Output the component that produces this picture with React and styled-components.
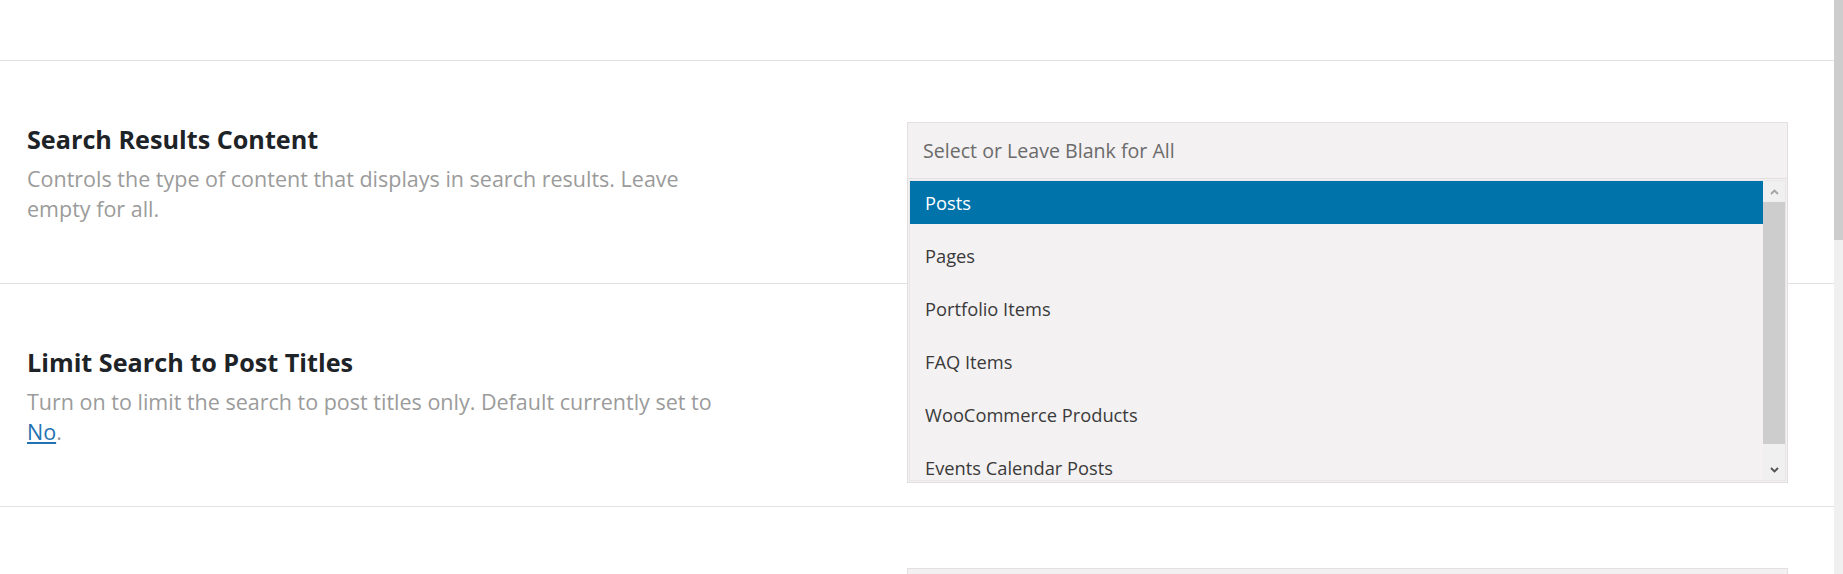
import styled, { createGlobalStyle } from "styled-components";

const GlobalStyle = createGlobalStyle`
  html, body {
    margin: 0;
    padding: 0;
    background: #ffffff;
    overflow: hidden;
  }
  body {
    font-family: "Open Sans", "Noto Sans", sans-serif;
  }
`;

const options = [
  "Posts",
  "Pages",
  "Portfolio Items",
  "FAQ Items",
  "WooCommerce Products",
  "Events Calendar Posts",
];

const Page = styled.div`
  display: flex;
  width: 1843px;
  height: 574px;
  overflow: hidden;
`;

const Main = styled.div`
  flex: 1;
  display: flex;
  flex-direction: column;
`;

const TopSpacer = styled.div`
  height: 60px;
  flex: none;
  border-bottom: 1px solid #e2e2e2;
`;

const Row = styled.div`
  flex: none;
  height: 223px;
  box-sizing: border-box;
  border-bottom: 1px solid #e2e2e2;
  display: flex;
  justify-content: space-between;
  padding: 0 46px 0 27px;
`;

const Info = styled.div`
  width: 700px;
  padding-top: 63px;
`;

const Title = styled.h3`
  margin: 0 0 10px;
  font-size: 25.2px;
  line-height: 30px;
  font-weight: 700;
  color: #1d2327;
`;

const Description = styled.p`
  margin: 0;
  font-size: 21.5px;
  line-height: 30px;
  color: #9b9b9b;

  a {
    color: #2271b1;
    text-decoration: underline;
  }
`;

const Field = styled.div`
  width: 881px;
  padding-top: 61px;
`;

const SelectBox = styled.div`
  position: relative;
  height: 57px;
  box-sizing: border-box;
  border: 1px solid #e2e0e1;
  background: #f3f1f2;
  display: flex;
  align-items: center;
  padding: 0 15px;
  font-size: 19.6px;
  color: #6b6b6b;
  z-index: ${(p) => (p.open ? 5 : 1)};
`;

const ListFrame = styled.div`
  position: absolute;
  top: 55px;
  left: -1px;
  right: -1px;
  height: 305px;
  box-sizing: border-box;
  border: 1px solid #e0dede;
  padding: 1px;
  background: #f3f1f2;
`;

const ListInner = styled.div`
  display: flex;
  height: 100%;
  box-sizing: border-box;
  border: 1px solid #e8e6e7;
`;

const OptionList = styled.div`
  flex: 1;
  overflow: hidden;
`;

const Option = styled.div`
  height: 43px;
  margin-bottom: 10px;
  display: flex;
  align-items: center;
  padding: 0 15px;
  font-size: 18.3px;
  color: ${(p) => (p.selected ? "#ffffff" : "#3a3a3a")};
  background: ${(p) => (p.selected ? "#0073aa" : "transparent")};
`;

const ScrollBar = styled.div`
  width: 22px;
  display: flex;
  flex-direction: column;
  background: #f0f0f0;
`;

const ScrollButton = styled.div`
  height: 21px;
  flex: none;
  display: flex;
  align-items: center;
  justify-content: center;
  color: ${(p) => (p.dim ? "#a3a3a3" : "#505050")};
`;

const ScrollThumb = styled.div`
  height: ${(p) => p.size}px;
  flex: none;
  background: #cdcdcd;
`;

const ScrollTrack = styled.div`
  flex: 1;
`;

const PageScroll = styled.div`
  width: 9px;
  flex: none;
  background: #f0f0f0;
  display: flex;
  flex-direction: column;
`;

const PageThumb = styled.div`
  height: 240px;
  background: #cdcdcd;
`;

const Chevron = ({ up }) => (
  <svg width="9" height="6" viewBox="0 0 9 6">
    <path
      d={up ? "M1 5 L4.5 1.5 L8 5" : "M1 1 L4.5 4.5 L8 1"}
      fill="none"
      stroke="currentColor"
      strokeWidth="1.8"
    />
  </svg>
);

const App = () => {
  return (
    <Page>
      <GlobalStyle />
      <Main>
        <TopSpacer />
        <Row>
          <Info>
            <Title>Search Results Content</Title>
            <Description>
              Controls the type of content that displays in search results. Leave
              empty for all.
            </Description>
          </Info>
          <Field>
            <SelectBox open>
              Select or Leave Blank for All
              <ListFrame>
                <ListInner>
                  <OptionList>
                    {options.map((o, i) => (
                      <Option key={o} selected={i === 0}>
                        {o}
                      </Option>
                    ))}
                  </OptionList>
                  <ScrollBar>
                    <ScrollButton dim>
                      <Chevron up />
                    </ScrollButton>
                    <ScrollThumb size={242} />
                    <ScrollTrack />
                    <ScrollButton>
                      <Chevron />
                    </ScrollButton>
                  </ScrollBar>
                </ListInner>
              </ListFrame>
            </SelectBox>
          </Field>
        </Row>
        <Row>
          <Info>
            <Title>Limit Search to Post Titles</Title>
            <Description>
              Turn on to limit the search to post titles only. Default currently set to{" "}
              <a href="#">No</a>.
            </Description>
          </Info>
          <Field>
            <SelectBox />
          </Field>
        </Row>
        <Row>
          <Info />
          <Field>
            <SelectBox />
          </Field>
        </Row>
      </Main>
      <PageScroll>
        <PageThumb />
      </PageScroll>
    </Page>
  );
};

export default App;
